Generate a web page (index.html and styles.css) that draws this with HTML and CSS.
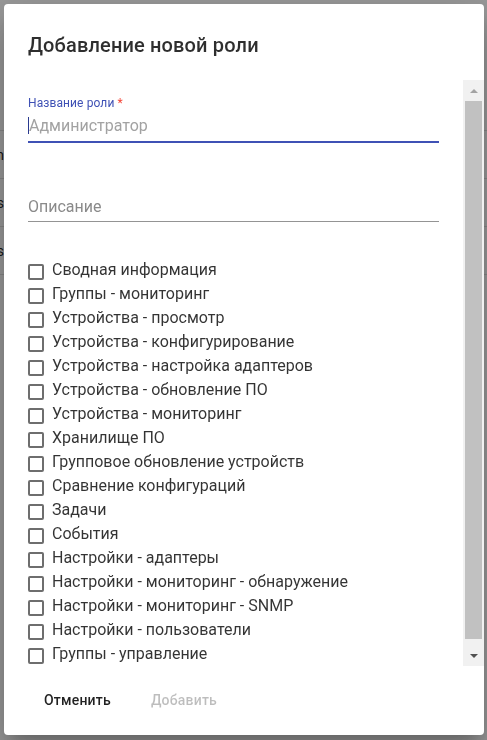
FILE: index.html
```html
<!DOCTYPE html>
<html lang="ru">
<head>
<meta charset="utf-8">
<title>Добавление новой роли</title>
<link rel="stylesheet" href="styles.css">
</head>
<body>
<div class="bg-page">
  <div class="bg-row"><div class="bg-cell">Admin</div></div>
  <div class="bg-row"><div class="bg-cell">Users</div></div>
  <div class="bg-row"><div class="bg-cell">Roles</div></div>
  <div class="bg-row"></div>
</div>
<div class="backdrop"></div>
<div class="dialog" role="dialog">
  <h2 class="dialog-title">Добавление новой роли</h2>
  <div class="dialog-body">
    <div class="content">
      <div class="field field-first">
        <label class="field-label">Название роли <span class="asterisk">*</span></label>
        <div class="field-input focused"><span class="caret"></span><span class="placeholder">Администратор</span></div>
      </div>
      <div class="field field-second">
        <div class="field-input"><span class="rest-label">Описание</span></div>
      </div>
      <ul class="perm-list">
        <li class="perm"><span class="box"></span><span>Сводная информация</span></li>
        <li class="perm"><span class="box"></span><span>Группы - мониторинг</span></li>
        <li class="perm"><span class="box"></span><span>Устройства - просмотр</span></li>
        <li class="perm"><span class="box"></span><span>Устройства - конфигурирование</span></li>
        <li class="perm"><span class="box"></span><span>Устройства - настройка адаптеров</span></li>
        <li class="perm"><span class="box"></span><span>Устройства - обновление ПО</span></li>
        <li class="perm"><span class="box"></span><span>Устройства - мониторинг</span></li>
        <li class="perm"><span class="box"></span><span>Хранилище ПО</span></li>
        <li class="perm"><span class="box"></span><span>Групповое обновление устройств</span></li>
        <li class="perm"><span class="box"></span><span>Сравнение конфигураций</span></li>
        <li class="perm"><span class="box"></span><span>Задачи</span></li>
        <li class="perm"><span class="box"></span><span>События</span></li>
        <li class="perm"><span class="box"></span><span>Настройки - адаптеры</span></li>
        <li class="perm"><span class="box"></span><span>Настройки - мониторинг - обнаружение</span></li>
        <li class="perm"><span class="box"></span><span>Настройки - мониторинг - SNMP</span></li>
        <li class="perm"><span class="box"></span><span>Настройки - пользователи</span></li>
        <li class="perm"><span class="box"></span><span>Группы - управление</span></li>
        <li class="perm"><span class="box"></span><span>Группы - просмотр</span></li>
      </ul>
    </div>
    <div class="scrollbar">
      <div class="sb-btn"><span class="tri-up"></span></div>
      <div class="sb-thumb"></div>
      <div class="sb-spacer"></div>
      <div class="sb-btn"><span class="tri-down"></span></div>
    </div>
  </div>
  <div class="actions">
    <button class="btn">Отменить</button>
    <button class="btn btn-disabled" disabled>Добавить</button>
  </div>
</div>
</body>
</html>
```
FILE: styles.css
```css
html, body {
  margin: 0;
  padding: 0;
  height: 100%;
  background: #ffffff;
  font-family: Roboto, "Noto Sans", "Liberation Sans", sans-serif;
  overflow: hidden;
}

.bg-page {
  padding-top: 130px;
}

.bg-row {
  height: 47px;
  border-top: 1px solid #e0e0e0;
  display: flex;
  align-items: center;
}

.bg-cell {
  width: 4px;
  overflow: hidden;
  display: flex;
  justify-content: flex-end;
  white-space: nowrap;
  font-size: 14px;
  color: rgba(0, 0, 0, 0.87);
}

.backdrop {
  position: fixed;
  inset: 0;
  background: rgba(0, 0, 0, 0.4);
}

.dialog {
  position: fixed;
  left: 4px;
  top: 4px;
  width: 480px;
  height: 731px;
  background: #ffffff;
  border-radius: 4px;
  box-shadow: 0 11px 15px -7px rgba(0, 0, 0, 0.2), 0 24px 38px 3px rgba(0, 0, 0, 0.14), 0 9px 46px 8px rgba(0, 0, 0, 0.12);
  display: flex;
  flex-direction: column;
  overflow: hidden;
}

.dialog-title {
  margin: 0;
  padding: 25px 24px 19px;
  font-size: 20px;
  line-height: 32px;
  font-weight: 500;
  color: rgba(0, 0, 0, 0.82);
  letter-spacing: 0.15px;
}

.dialog-body {
  display: flex;
  height: 586px;
}

.content {
  flex: 1;
  padding: 0 24px;
  overflow: hidden;
}

.field-first {
  margin-top: 16px;
}

.field-label {
  display: block;
  font-size: 12px;
  line-height: 14px;
  height: 14px;
  color: #3f51b5;
  letter-spacing: 0.1px;
}

.asterisk {
  color: #f44336;
}

.field-input {
  display: flex;
  align-items: center;
  font-size: 16px;
  line-height: 19px;
  height: 19px;
  padding: 6px 0 5px;
  border-bottom: 1px solid rgba(0, 0, 0, 0.42);
}

.field-input.focused {
  padding-bottom: 6px;
  border-bottom: 2px solid #3f51b5;
}

.caret {
  width: 1px;
  height: 17px;
  background: #2a3a8f;
}

.placeholder {
  color: #a2a2a2;
}

.field-second {
  margin-top: 48px;
}

.rest-label {
  color: #8a8a8a;
}

.perm-list {
  list-style: none;
  margin: 36px 0 0;
  padding: 0;
}

.perm {
  display: flex;
  align-items: flex-start;
  height: 24px;
  font-size: 16px;
  line-height: 24px;
  color: rgba(0, 0, 0, 0.8);
}

.box {
  box-sizing: border-box;
  width: 16px;
  height: 16px;
  margin-top: 6px;
  margin-right: 8px;
  border: 2px solid #6e6e6e;
  border-radius: 2px;
  flex: none;
}

.scrollbar {
  width: 21px;
  background: #f1f1f1;
  display: flex;
  flex-direction: column;
}

.sb-btn {
  height: 21px;
  display: flex;
  align-items: center;
  justify-content: center;
  flex: none;
}

.tri-up {
  width: 0;
  height: 0;
  border-left: 4px solid transparent;
  border-right: 4px solid transparent;
  border-bottom: 4px solid #a3a3a3;
}

.tri-down {
  width: 0;
  height: 0;
  border-left: 4px solid transparent;
  border-right: 4px solid transparent;
  border-top: 4px solid #505050;
}

.sb-thumb {
  height: 538px;
  margin: 0 2px;
  background: #c1c1c1;
  flex: none;
}

.sb-spacer {
  flex: 1;
}

.actions {
  display: flex;
  gap: 8px;
  padding: 16px 24px 17px;
}

.btn {
  font-family: Roboto, "Noto Sans", "Liberation Sans", sans-serif;
  font-size: 14px;
  font-weight: 500;
  line-height: 24px;
  letter-spacing: 0.2px;
  padding: 6px 16px;
  min-width: 64px;
  border: none;
  background: transparent;
  border-radius: 4px;
  color: rgba(0, 0, 0, 0.87);
  cursor: pointer;
}

.btn-disabled {
  color: rgba(0, 0, 0, 0.26);
  cursor: default;
}
```
